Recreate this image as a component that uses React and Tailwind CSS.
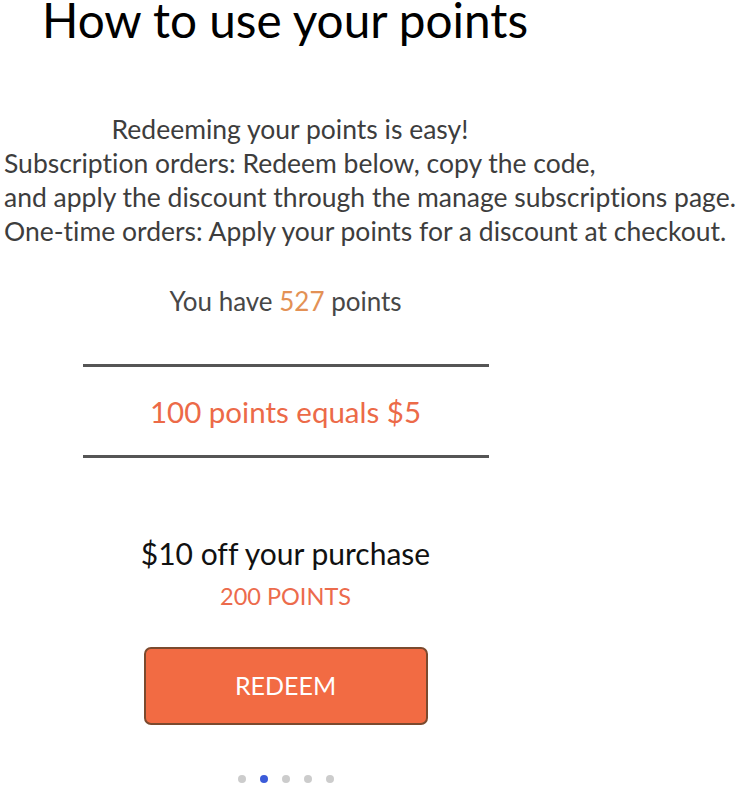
import React from "react";

const dots = [false, true, false, false, false];

export default function App() {
  return (
    <div className="w-[744px] h-[787px] overflow-hidden bg-white font-['Lato','Open_Sans',sans-serif] [font-variant-ligatures:no-common-ligatures]">
      {/* Title */}
      <h1 className="pl-[42px] text-[47.7px] leading-[40px] text-black">
        How to use your points
      </h1>

      {/* Intro */}
      <div className="mt-[72px] whitespace-nowrap text-[26.5px] leading-[34px] text-[#3d3d3d]">
        <div className="w-[580px] text-center">Redeeming your points is easy!</div>
        <div className="pl-[4px]">Subscription orders: Redeem below, copy the code,</div>
        <div className="pl-[4px]">and apply the discount through the manage subscriptions page.</div>
        <div className="pl-[4px]">One-time orders: Apply your points for a discount at checkout.</div>
      </div>

      {/* Points + rate */}
      <div className="w-[571px] flex flex-col items-center">
        <p className="mt-[36px] text-[26px] leading-[34px] text-[#474747]">
          You have <span className="text-[#e39155]">527</span> points
        </p>
        <div className="mt-[46px] w-[406px] border-t-[3px] border-[#555555]" />
        <p className="mt-[28px] text-[29.5px] leading-[34px] text-[#ec6a48]">100 points equals $5</p>
        <div className="mt-[26px] w-[406px] border-t-[3px] border-[#555555]" />

        {/* Reward */}
        <p className="mt-[78px] text-[30px] leading-[34px] text-[#111111]">$10 off your purchase</p>
        <p className="mt-[12px] text-[23.5px] leading-[28px] text-[#ec6b4c]">200 POINTS</p>
        <button className="mt-[37px] w-[284px] h-[78px] rounded-[7px] border-2 border-[#7b4a2e] bg-[#f26b43] text-[25px] text-white">
          REDEEM
        </button>

        {/* Pager */}
        <div className="mt-[50px] flex gap-[14px]">
          {dots.map((active, i) => (
            <span
              key={i}
              className={
                active
                  ? "w-[8px] h-[8px] rounded-full bg-[#3b5bd9]"
                  : "w-[8px] h-[8px] rounded-full bg-[#cccccc]"
              }
            />
          ))}
        </div>
      </div>
    </div>
  );
}
